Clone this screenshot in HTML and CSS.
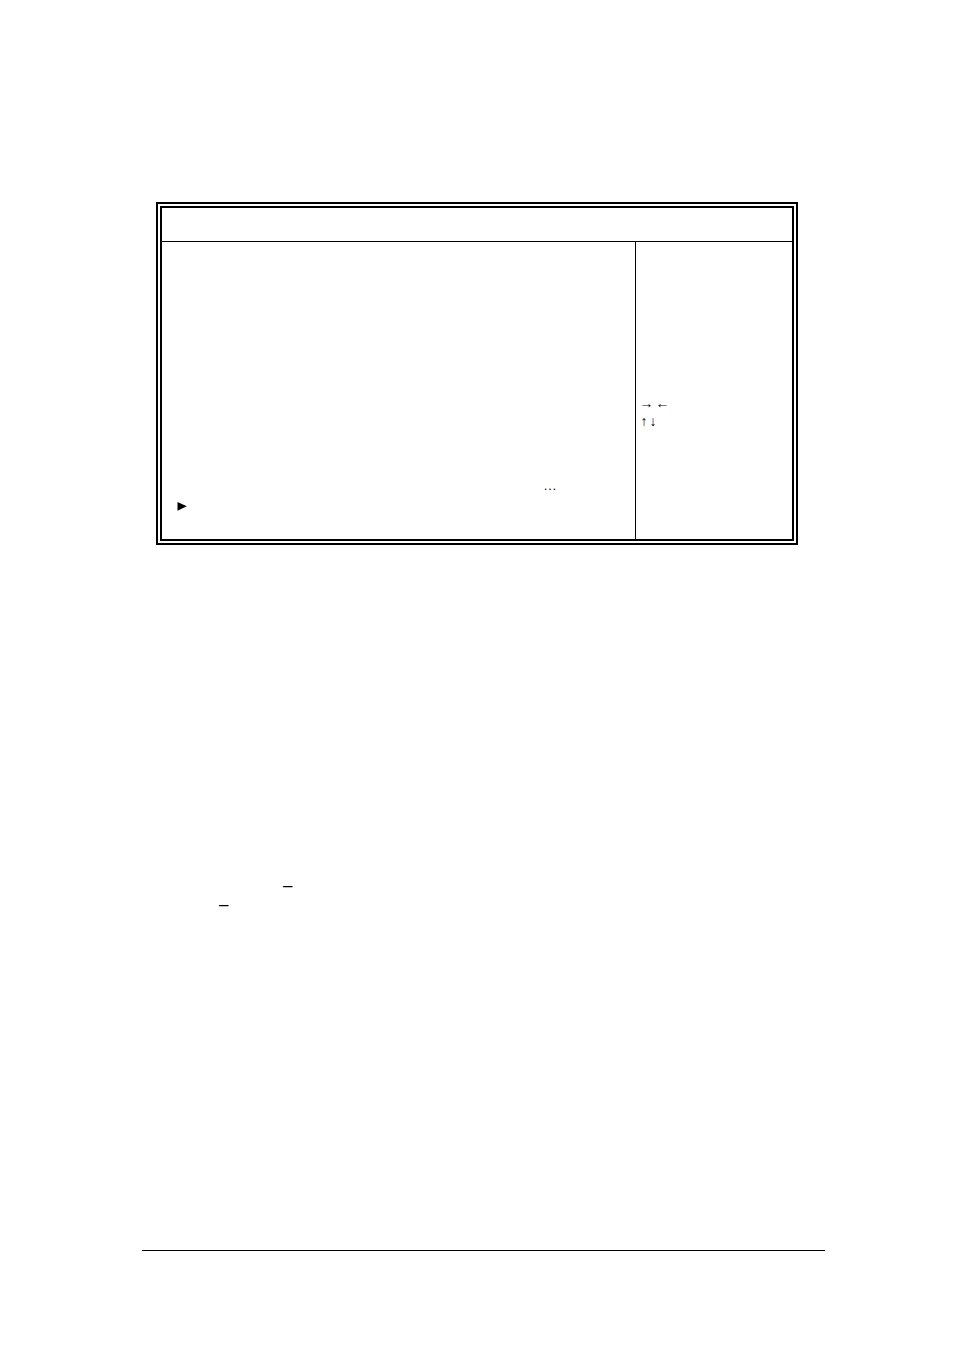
FILE: index.html
```html
<!DOCTYPE html>
<html lang="en">
<head>
    <meta charset="UTF-8">
    <meta name="viewport" content="width=device-width, initial-scale=1.0">
    <title>Setup Menu</title>
    <link rel="stylesheet" href="styles.css">
</head>
<body>

    <main class="page">
        <!-- Setup screen -->
        <section class="screen">
            <div class="screen-header"></div>
            <div class="screen-body">
                <div class="settings">
                    <p class="more">…</p>
                    <p class="submenu">
                        <svg class="marker" viewBox="0 0 10 10" aria-hidden="true"><path d="M0.5 0.9 L9.8 5.3 L0.5 9.7 Z"/></svg>
                    </p>
                </div>
                <div class="help">
                    <p class="keys"><span>→</span><span>←</span></p>
                    <p class="keys vertical"><span>↑</span><span>↓</span></p>
                </div>
            </div>
        </section>

        <!-- Item notes -->
        <section class="notes">
            <p class="note">–</p>
            <p class="note outer">–</p>
        </section>

        <footer class="page-footer"></footer>
    </main>

</body>
</html>
```

FILE: styles.css
```css
* {
    margin: 0;
    padding: 0;
    box-sizing: border-box;
}

body {
    background: white;
    color: black;
    font-family: "Liberation Sans", sans-serif;
}

.page {
    display: flex;
    flex-direction: column;
    min-height: 100vh;
    padding: 202px 129px 99px 142px;
}

/* Setup screen */
.screen {
    margin: 0 27px 0 14px;
    border: 6px double black;
    font-family: "Liberation Serif", serif;
    line-height: 18px;
}

.screen-header {
    height: 34px;
    border-bottom: 1px solid black;
}

.screen-body {
    display: grid;
    grid-template-columns: 3fr 1fr;
    min-height: 297px;
}

.settings {
    display: flex;
    flex-direction: column;
    justify-content: flex-end;
    gap: 2px;
    padding: 0 78px 24px 15px;
    font-size: 13px;
}

.more {
    text-align: right;
}

.submenu {
    display: flex;
    align-items: center;
    height: 18px;
}

.marker {
    width: 10px;
    height: 10px;
}

.help {
    padding: 153px 4px 0;
    border-left: 1px solid black;
    font-size: 14px;
}

.keys {
    display: flex;
    gap: 2px;
}

.vertical {
    padding-left: 1px;
}

/* Item notes */
.notes {
    padding: 331px 0 0 77px;
    font-size: 17px;
    line-height: 19px;
}

.note {
    padding-left: 64px;
}

.outer {
    padding-left: 0;
}

.page-footer {
    margin-top: auto;
    border-top: 1px solid black;
}
```
